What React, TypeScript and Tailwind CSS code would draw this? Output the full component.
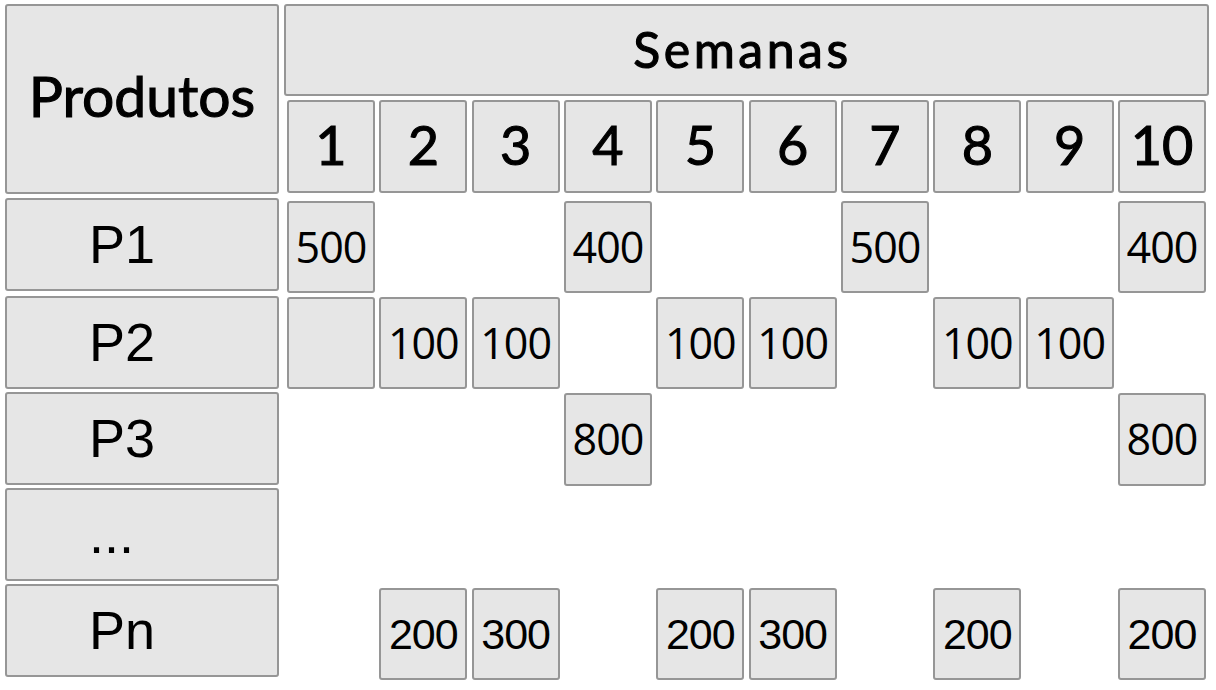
import React from "react";

const BOX = "bg-[#e6e6e6] border-2 border-[#969696] rounded-[3px] flex items-center text-black";
const HEAD = "font-['Lato',sans-serif] font-normal [-webkit-text-stroke:1.1px_black] justify-center";
const LABEL = "font-['Liberation_Sans',Arial,sans-serif] text-[54px] justify-start pl-[82px]";

type Row = {
  label: string;
  rowClass: string;
  cellClass: string;
  fontClass: string;
  cells: (string | null)[];
};

const rows: Row[] = [
  {
    label: "P1",
    rowClass: "mt-[4px]",
    cellClass: "mt-[3px] h-[92px]",
    fontClass: "font-['Open_Sans',sans-serif]",
    cells: ["500", null, null, "400", null, null, "500", null, null, "400"],
  },
  {
    label: "P2",
    rowClass: "mt-[5px]",
    cellClass: "mt-[1px] h-[92px]",
    fontClass: "font-['Open_Sans',sans-serif]",
    cells: ["", "100", "100", null, "100", "100", null, "100", "100", null],
  },
  {
    label: "P3",
    rowClass: "mt-[3px]",
    cellClass: "mt-[1px] h-[93px]",
    fontClass: "font-['Open_Sans',sans-serif]",
    cells: [null, null, null, "800", null, null, null, null, null, "800"],
  },
  {
    label: "...",
    rowClass: "mt-[3px]",
    cellClass: "mt-[1px] h-[92px]",
    fontClass: "font-['Open_Sans',sans-serif]",
    cells: [null, null, null, null, null, null, null, null, null, null],
  },
  {
    label: "Pn",
    rowClass: "mt-[3px]",
    cellClass: "mt-[4px] h-[92px]",
    fontClass: "font-['Liberation_Sans',Arial,sans-serif]",
    cells: [null, "200", "300", null, "200", "300", null, "200", null, "200"],
  },
];

export default function App() {
  return (
    <div className="w-[1216px] h-[690px] bg-white overflow-hidden pl-[5px] pt-[4px]">
      {/* Header */}
      <div className="flex items-start">
        <div className={`${BOX} ${HEAD} w-[274px] h-[190px] text-[57px] pb-[6px]`}>
          Produtos
        </div>
        <div className="ml-[5px] flex flex-col">
          <div className={`${BOX} ${HEAD} w-[925px] h-[92px] text-[50px] tracking-[3.5px] pb-[2px] pr-[8px]`}>
            Semanas
          </div>
          <div className="ml-[3px] mt-[4px] grid grid-cols-[repeat(10,88px)] gap-x-[4.33px]">
            {Array.from({ length: 10 }, (_, i) => (
              <div key={i} className={`${BOX} ${HEAD} h-[93px] text-[54px] pb-[4px]`}>
                {i + 1}
              </div>
            ))}
          </div>
        </div>
      </div>

      {/* Rows */}
      {rows.map((r) => (
        <div key={r.label} className={`flex items-start h-[93px] ${r.rowClass}`}>
          <div className={`${BOX} ${LABEL} w-[274px] h-[93px]`}>{r.label}</div>
          <div className={`ml-[8px] grid grid-cols-[repeat(10,88px)] gap-x-[4.33px] ${r.cellClass}`}>
            {r.cells.map((c, i) =>
              c === null ? (
                <div key={i} />
              ) : (
                <div key={i} className={`${BOX} ${r.fontClass} justify-center h-full text-[43px] tracking-[-1px]`}>
                  {c}
                </div>
              )
            )}
          </div>
        </div>
      ))}
    </div>
  );
}
